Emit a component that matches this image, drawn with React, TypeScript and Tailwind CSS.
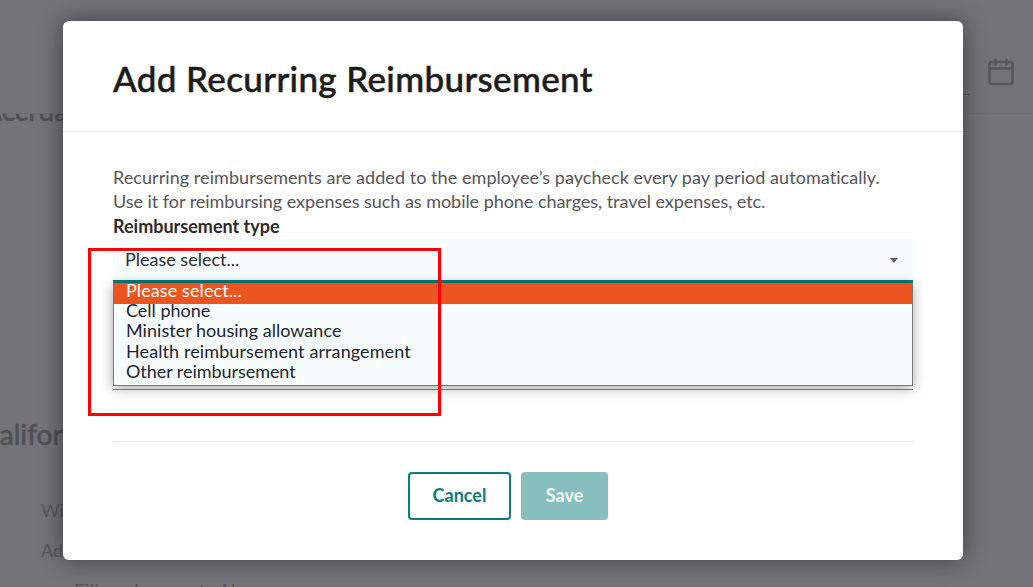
export default function App() {
  const font = "font-['Lato','Noto_Sans',sans-serif]";
  return (
    <div className={`relative h-[587px] w-[1033px] overflow-hidden bg-[#737378] ${font}`}>
      {/* page behind the overlay */}
      <div className="flex h-full flex-col text-[#505055]">
        <div className="relative z-10 flex h-[114px] shrink-0 items-start justify-end border-b border-[#6d6d72] bg-[#737378] pr-[19px] pt-[58px]">
          <div className="absolute left-[960px] top-[94px] h-[1px] w-[10px] bg-[#58585d]" />
          <svg width="26" height="28" viewBox="0 0 26 28" fill="none" stroke="#57575c" strokeWidth="2.6" strokeLinecap="round" strokeLinejoin="round">
            <rect x="1.5" y="4" width="23" height="22" rx="2" />
            <path d="M1.5 10.5h23M7.5 1.5v5M18.5 1.5v5" />
          </svg>
        </div>
        <div className="-mt-[20px] h-[321px] shrink-0 -ml-[17px] whitespace-nowrap text-[28px] font-medium leading-[32px] [-webkit-text-stroke:0.4px_#505055]">Accrual</div>
        <div className="-ml-[19px] mt-[2px] whitespace-nowrap text-[28px] font-medium leading-[34px] [-webkit-text-stroke:0.4px_#505055]">California</div>
        <div className="mt-[48px] flex flex-col gap-[18px] pl-[41px] text-[18px] leading-[22px] text-[#56565b]">
          <div>Withholding</div>
          <div>Additional withholding</div>
          <div className="pl-[33px] whitespace-nowrap tracking-[0.6px]">Filing changes to N</div>
        </div>
      </div>

      {/* modal */}
      <div className="absolute left-[63px] top-[21px] z-20 flex h-[539px] w-[900px] flex-col rounded-[6px] bg-white text-[#1c1c1c] shadow-[0_0_24px_rgba(0,0,0,0.45)]">
        <div className="flex h-[111px] shrink-0 items-center border-b border-[#e9e9e9] px-[50px] pt-[4px]">
          <h1 className="text-[35px] font-medium leading-[40px] tracking-[0.35px] text-[#1c1c1c] [-webkit-text-stroke:0.5px_#1c1c1c]">Add Recurring Reimbursement</h1>
        </div>
        <div className="flex flex-1 flex-col px-[50px] pt-[33px]">
          <p className="whitespace-nowrap text-[18px] leading-[24px] tracking-[0.06px] text-[#55555a]">
            Recurring reimbursements are added to the employee’s paycheck every pay period automatically.
            <br />
            <span className="tracking-[-0.04px]">Use it for reimbursing expenses such as mobile phone charges, travel expenses, etc.</span>
          </p>
          <label className="mt-[1px] text-[18px] font-bold leading-[24px] text-[#2b2b2e]">Reimbursement type</label>
          <div className="mt-[1px] flex h-[44px] items-center justify-between border-b-[3px] border-[#0a7d79] bg-[#f7fdfd] pb-[1px] pl-[12px] pr-[15px] text-[18px] text-[#2b2b2e]">
            <span>Please select...</span>
            <span className="mt-[2px] h-0 w-0 border-x-[4px] border-t-[5px] border-x-transparent border-t-[#5f5f64]" />
          </div>
          <div className="mt-[106px] h-0 shrink-0 border-t border-[#85858a]" />
          <div className="mt-[51px] border-t border-[#e9e9e9]" />
          <div className="mt-[30px] flex justify-center gap-[10px] pr-[10px]">
            <button className="h-[48px] w-[103px] rounded-[4px] border-2 border-[#0a7d79] bg-white pb-[2px] text-[18px] font-bold text-[#0a7d79]">Cancel</button>
            <button className="h-[48px] w-[87px] rounded-[4px] bg-[#86bfbd] pb-[2px] text-[18px] font-bold text-[#f2f9f9]">Save</button>
          </div>
        </div>
      </div>

      {/* open select list */}
      <ul className="absolute left-[113px] top-[283px] z-30 flex h-[103px] w-[800px] flex-col border border-[#77777a] bg-[#f7fdfd] text-[18px] leading-[13px] text-[#1c2430] shadow-[0_2px_12px_rgba(0,0,0,0.35)]">
        <li className="h-[20.2px] bg-[#ed5520] pl-[12px] text-white tracking-[0.1px]">Please select...</li>
        <li className="h-[20.2px] pl-[12px]">Cell phone</li>
        <li className="h-[20.2px] pl-[12px] tracking-[0.03px]">Minister housing allowance</li>
        <li className="h-[20.2px] pl-[12px] tracking-[0.1px]">Health reimbursement arrangement</li>
        <li className="h-[20.2px] pl-[12px] tracking-[-0.05px]">Other reimbursement</li>
      </ul>

      {/* annotation */}
      <div className="absolute left-[88px] top-[248px] z-40 h-[168px] w-[353px] border-[3px] border-[#ff0000]" />
    </div>
  );
}
